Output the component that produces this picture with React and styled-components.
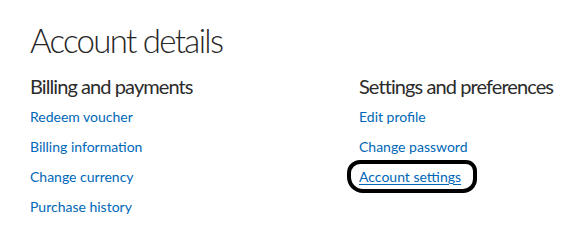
import React from "react";
import styled, { createGlobalStyle } from "styled-components";

const Global = createGlobalStyle`
  html, body { margin: 0; padding: 0; background: #fff; }
  body { font-family: "Lato", "Noto Sans", sans-serif; }
`;

const Page = styled.div`
  width: 564px;
  height: 245px;
  box-sizing: border-box;
  padding: 20px 0 0 30px;
  overflow: hidden;
  background: #fff;
`;

const Title = styled.h1`
  margin: 0;
  font-size: 33px;
  font-weight: 300;
  line-height: 40px;
  letter-spacing: -1.7px;
  color: #262626;
`;

const Columns = styled.div`
  display: grid;
  grid-template-columns: 329px 1fr;
  margin-top: 13px;
`;

const Column = styled.section`
  display: flex;
  flex-direction: column;
`;

const Heading = styled.h2`
  margin: 0 0 8px;
  font-size: 20px;
  font-weight: 400;
  line-height: 26px;
  letter-spacing: -0.92px;
  color: #2b2b2b;
  white-space: nowrap;
`;

const LinkList = styled.ul`
  list-style: none;
  margin: 0;
  padding: 0;
  display: flex;
  flex-direction: column;
  gap: 10px;
`;

const Item = styled.li`
  position: relative;
  width: max-content;
  height: 20px;
`;

const Link = styled.a`
  display: block;
  font-size: 14px;
  line-height: 20px;
  color: #0067b8;
  text-decoration: ${(p) => (p.$active ? "underline" : "none")};
  text-underline-offset: 2px;
  cursor: pointer;
`;

const Circle = styled.span`
  position: absolute;
  left: -12px;
  right: -16px;
  top: -7px;
  bottom: -6px;
  border: 4px solid #000;
  border-radius: 13px 11px 14px 16px;
  pointer-events: none;
`;

const sections = [
  {
    heading: "Billing and payments",
    links: ["Redeem voucher", "Billing information", "Change currency", "Purchase history"],
  },
  {
    heading: "Settings and preferences",
    links: ["Edit profile", "Change password", "Account settings"],
    active: "Account settings",
  },
];

export default function App() {
  return (
    <Page>
      <Global />
      <Title>Account details</Title>
      <Columns>
        {sections.map((s) => (
          <Column key={s.heading}>
            <Heading>{s.heading}</Heading>
            <LinkList>
              {s.links.map((l) => (
                <Item key={l}>
                  <Link $active={l === s.active}>{l}</Link>
                  {l === s.active && <Circle />}
                </Item>
              ))}
            </LinkList>
          </Column>
        ))}
      </Columns>
    </Page>
  );
}
